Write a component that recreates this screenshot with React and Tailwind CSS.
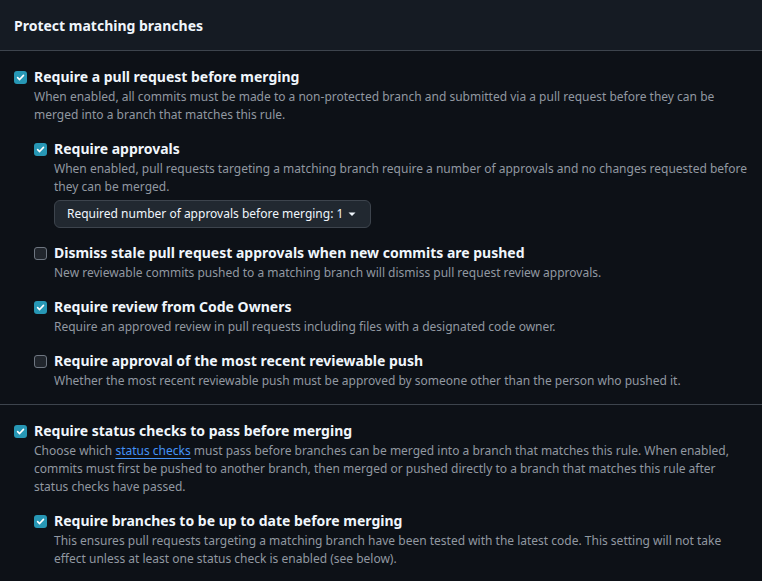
import React from 'react';

const Check = ({ checked }) =>
  checked ? (
    <span className="mt-[4px] flex h-[13px] w-[13px] shrink-0 items-center justify-center rounded-[3px] bg-[#2797b5]">
      <svg width="9" height="9" viewBox="0 0 10 10" fill="none">
        <path d="M1.8 5.2 4 7.3 8.3 2.6" stroke="#fff" strokeWidth="1.8" strokeLinecap="round" strokeLinejoin="round" />
      </svg>
    </span>
  ) : (
    <span className="mt-[4px] h-[13px] w-[13px] shrink-0 rounded-[3px] border border-[#6e7681] bg-[#21262d]" />
  );

const Option = ({ checked, title, children, extra }) => (
  <div className="flex gap-[7px]">
    <Check checked={checked} />
    <div className="flex-1">
      <div className="text-[14px] font-bold leading-[20px] text-[#f0f6fc]">{title}</div>
      <p className="mt-[1px] text-[12px] leading-[18px] text-[#9198a1]">{children}</p>
      {extra}
    </div>
  </div>
);

export default function App() {
  return (
    <div className="min-h-[581px] w-[762px] bg-[#0d1117]" style={{ fontFamily: '"Noto Sans", sans-serif' }}>
      <div className="flex h-[51px] items-center border-b border-[#3d444d] bg-[#151b23] px-[14px]">
        <h2 className="text-[14px] font-bold text-[#f0f6fc]">Protect matching branches</h2>
      </div>

      <div className="border-b border-[#3d444d] pl-[14px] pr-[14px] pt-[16px] pb-[14px]">
        <Option checked title="Require a pull request before merging">
          When enabled, all commits must be made to a non-protected branch and submitted via a pull request before they can be
          merged into a branch that matches this rule.
        </Option>
        <div className="mt-[15px] flex flex-col gap-[15px] pl-[20px]">
          <Option
            checked
            title="Require approvals"
            extra={
              <button className="mt-[4px] flex h-[28px] w-[317px] items-center gap-[4px] rounded-[6px] border border-[#3d444d] bg-[#212830] px-[12px] text-[12px] text-[#f0f6fc]">
                Required number of approvals before merging: 1
                <svg width="8" height="8" viewBox="0 0 8 8" className="ml-[1px]">
                  <path d="M0.5 2.5h7L4 6z" fill="#f0f6fc" />
                </svg>
              </button>
            }
          >
            When enabled, pull requests targeting a matching branch require a number of approvals and no changes requested before
            they can be merged.
          </Option>
          <div className="mt-[0px]">
            <Option title="Dismiss stale pull request approvals when new commits are pushed">
              New reviewable commits pushed to a matching branch will dismiss pull request review approvals.
            </Option>
          </div>
          <Option checked title="Require review from Code Owners">
            Require an approved review in pull requests including files with a designated code owner.
          </Option>
          <Option title="Require approval of the most recent reviewable push">
            Whether the most recent reviewable push must be approved by someone other than the person who pushed it.
          </Option>
        </div>
      </div>

      <div className="pl-[14px] pr-[14px] pt-[16px]">
        <Option
          checked
          title="Require status checks to pass before merging"
        >
          Choose which{' '}
          <a className="text-[#4493f8] underline decoration-[#4493f8] underline-offset-[3px]">status checks</a> must pass before
          branches can be merged into a branch that matches this rule. When enabled, commits must first be pushed to another
          branch, then merged or pushed directly to a branch that matches this rule after status checks have passed.
        </Option>
        <div className="mt-[15px] pl-[20px]">
          <Option checked title="Require branches to be up to date before merging">
            This ensures pull requests targeting a matching branch have been tested with the latest code. This setting will not take
            effect unless at least one status check is enabled (see below).
          </Option>
        </div>
      </div>
    </div>
  );
}
